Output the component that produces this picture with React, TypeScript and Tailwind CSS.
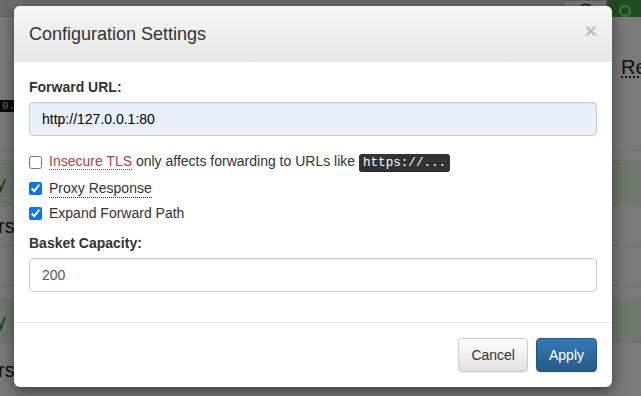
import { useState } from 'react';

function RefreshIcon() {
  return (
    <svg width="14" height="14" viewBox="0 0 24 24" fill="none" stroke="#333" strokeWidth="2.5" strokeLinecap="round">
      <path d="M20 12a8 8 0 1 1-2.3-5.6" />
      <path d="M20 4v5h-5" />
    </svg>
  );
}

function Background() {
  return (
    <div className="w-full h-[396px] bg-[#f4f4f4] flex flex-col">
      {/* navbar */}
      <div className="h-[17px] bg-[#d6d6d6] border-b border-[#c4c4c4] flex justify-end">
        <div className="w-[44px] h-[17px] bg-[#f0f0f0] border border-[#bbb] flex items-end justify-center">
          <RefreshIcon />
        </div>
        <div className="w-[34px] h-[17px] bg-[#3f9d3f] flex items-end pl-[12px]">
          <div className="w-[12px] h-[12px] rounded-full border-2 border-[#9fdc9f]" />
        </div>
      </div>
      <div className="h-[35px]" />
      <div className="h-[30px] flex justify-end pr-0">
        <span className="text-[20px] text-[#222] leading-[30px] underline decoration-dotted underline-offset-2 w-[20px] overflow-hidden whitespace-nowrap">Re</span>
      </div>
      <div className="h-[18px]" />
      <div className="h-[12px] flex">
        <code className="bg-[#111] text-[#ddd] font-['Liberation_Mono',monospace] text-[11px] leading-[12px] pl-[2px] w-[40px] overflow-hidden whitespace-nowrap">0.1:</code>
      </div>
      <div className="h-[38px]" />
      <div className="h-[10px] border-t border-[#ddd]" />
      <div className="h-[45px] bg-[#dff0d8] border-t border-[#ddd] flex items-center text-[20px] text-[#3c763d] pl-0">
        <span className="-ml-[4px]">y</span>
      </div>
      <div className="h-[40px] border-t border-[#ddd] flex items-center text-[20px] text-[#222]">
        <span className="-ml-[2px]">rs</span>
      </div>
      <div className="h-[40px] border-t border-[#ddd]" />
      <div className="h-[14px] border-t border-[#ddd]" />
      <div className="h-[43px] bg-[#dff0d8] border-t border-[#ddd] flex items-center text-[20px] text-[#3c763d]">
        <span className="-ml-[4px]">y</span>
      </div>
      <div className="flex-1 border-t border-[#ddd] flex items-center text-[20px] text-[#222]">
        <span className="-ml-[2px]">rs</span>
      </div>
    </div>
  );
}

export default function App() {
  const [forwardUrl, setForwardUrl] = useState('http://127.0.0.1:80');
  const [insecureTls, setInsecureTls] = useState(false);
  const [proxyResponse, setProxyResponse] = useState(true);
  const [expandPath, setExpandPath] = useState(true);
  const [capacity, setCapacity] = useState('200');

  return (
    <div className="relative w-[641px] h-[396px] overflow-hidden font-['Liberation_Sans',Arial,sans-serif] text-[14px] leading-[20px] text-[#333]">
      <Background />
      {/* backdrop */}
      <div className="absolute inset-0 bg-black/50" />

      {/* modal */}
      <div className="absolute left-[14px] top-[6px] w-[598px] bg-white rounded-[6px] shadow-[0_5px_15px_rgba(0,0,0,0.5)] overflow-hidden">
        <div className="h-[56px] px-[15px] flex items-center justify-between border-b border-[#e5e5e5] bg-gradient-to-b from-[#f5f5f5] to-[#e8e8e8]">
          <h4 className="text-[18px] leading-[26px] text-[#333] pt-[1px]">Configuration Settings</h4>
          <button className="text-[21px] font-bold leading-none text-black opacity-20 -mt-[6px]">×</button>
        </div>

        <div className="p-[15px]">
          <div className="mb-[15px]">
            <label className="block font-bold mb-[5px]">Forward URL:</label>
            <input
              type="text"
              value={forwardUrl}
              onChange={(e) => setForwardUrl(e.target.value)}
              className="w-full h-[34px] px-[12px] border border-[#ccc] rounded-[4px] bg-[#e8f0fe] text-[#000] outline-none shadow-[inset_0_1px_1px_rgba(0,0,0,0.075)]"
            />
          </div>

          <label className="flex items-center gap-[7px] h-[22px]">
            <input
              type="checkbox"
              checked={insecureTls}
              onChange={(e) => setInsecureTls(e.target.checked)}
              className="w-[13px] h-[13px] m-0"
            />
            <span>
              <abbr className="text-[#a94442] no-underline border-b border-dotted border-[#a94442]">Insecure TLS</abbr>{' '}
              only affects forwarding to URLs like{' '}
              <kbd className="bg-[#333] text-white rounded-[3px] px-[4px] py-[2px] text-[12.6px] font-['Liberation_Mono',monospace] shadow-[inset_0_-1px_0_rgba(0,0,0,0.25)]">https://...</kbd>
            </span>
          </label>

          <label className="flex items-center gap-[7px] h-[20px] mt-[5px]">
            <input
              type="checkbox"
              checked={proxyResponse}
              onChange={(e) => setProxyResponse(e.target.checked)}
              className="w-[13px] h-[13px] m-0"
            />
            <abbr className="no-underline border-b border-dotted border-[#333] leading-[18px]">Proxy Response</abbr>
          </label>

          <label className="flex items-center gap-[7px] h-[20px] mt-[5px] mb-[10px]">
            <input
              type="checkbox"
              checked={expandPath}
              onChange={(e) => setExpandPath(e.target.checked)}
              className="w-[13px] h-[13px] m-0"
            />
            <span>Expand Forward Path</span>
          </label>

          <div className="mb-[15px]">
            <label className="block font-bold mb-[5px]">Basket Capacity:</label>
            <input
              type="text"
              value={capacity}
              onChange={(e) => setCapacity(e.target.value)}
              className="w-full h-[34px] px-[12px] border border-[#ccc] rounded-[4px] bg-white text-[#555] outline-none shadow-[inset_0_1px_1px_rgba(0,0,0,0.075)]"
            />
          </div>
        </div>

        <div className="border-t border-[#e5e5e5] p-[15px] flex justify-end gap-[8px]">
          <button className="h-[34px] px-[12px] rounded-[4px] border border-[#ccc] bg-gradient-to-b from-white to-[#e0e0e0] text-[#333] shadow-[0_1px_1px_rgba(0,0,0,0.075)]">
            Cancel
          </button>
          <button className="h-[34px] px-[12px] rounded-[4px] border border-[#245580] bg-gradient-to-b from-[#337ab7] to-[#265a88] text-white shadow-[0_1px_1px_rgba(0,0,0,0.075)]">
            Apply
          </button>
        </div>
      </div>
    </div>
  );
}
